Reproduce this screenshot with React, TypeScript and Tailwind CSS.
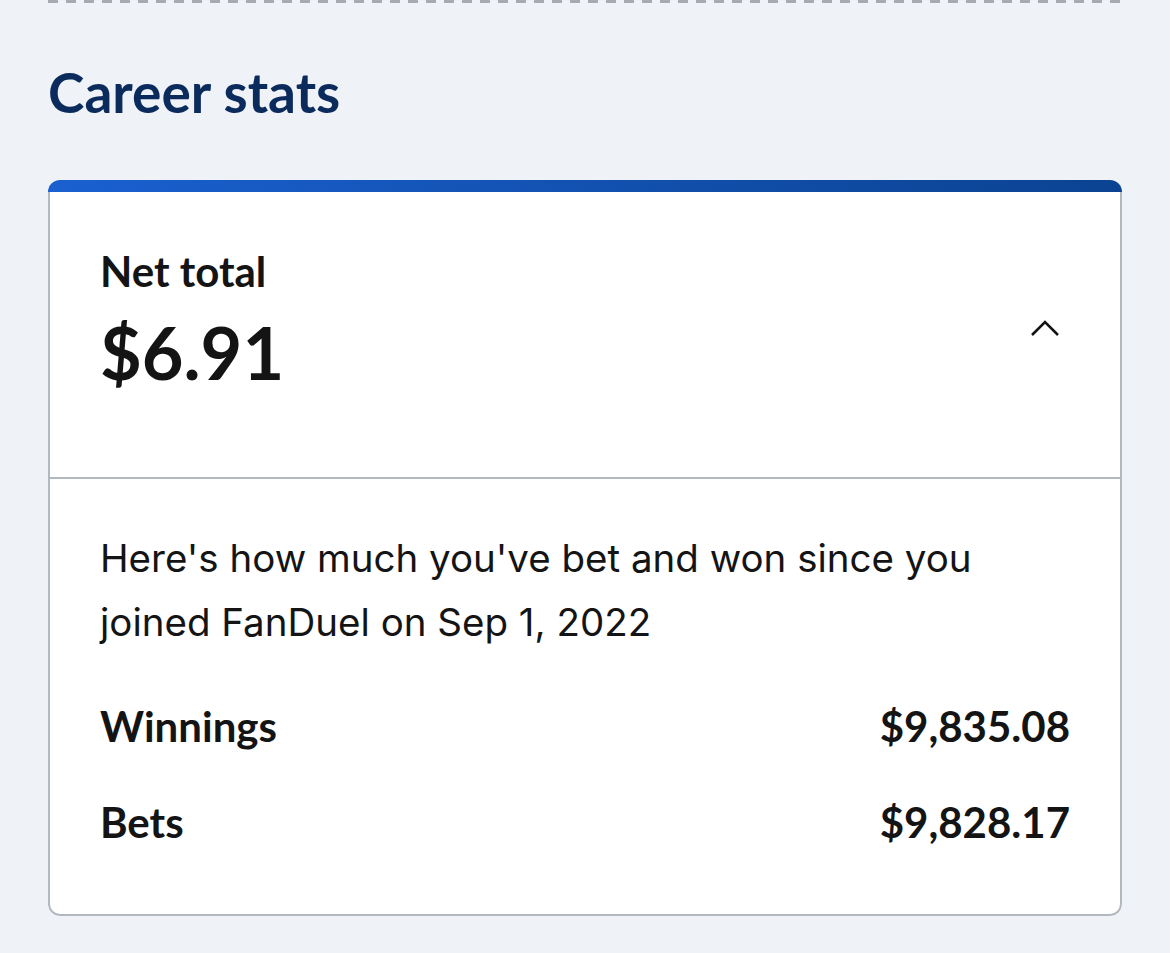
import React from "react";

export default function App() {
  const font = { fontFamily: "Lato, 'Noto Sans', sans-serif" };
  const body = { fontFamily: "Inter, 'Noto Sans', sans-serif" };
  return (
    <div className="min-h-[953px] w-[1170px] bg-[#eff2f7] pl-[48px] pr-[48px]" style={font}>
      <div className="h-[3px] w-full bg-[repeating-linear-gradient(90deg,#a7abb1_0px,#a7abb1_10px,transparent_10px,transparent_18px)]" />
      <h2 className="mt-[59px] text-[55px] leading-[60px] font-bold text-[#0b2b5c]">Career stats</h2>
      <div className="mt-[58px] overflow-hidden rounded-[12px]">
        <div className="h-[12px] bg-gradient-to-r from-[#1a60d0] to-[#0b4392]" />
        <div className="rounded-b-[12px] border-x-2 border-b-2 border-[#b1b8c0] bg-white">
          <div className="flex items-center justify-between px-[50px] pt-[54px] pb-[80px]">
            <div className="text-[#141414]">
              <div className="text-[42px] leading-[50px] font-bold">Net total</div>
              <div className="mt-[11px] text-[72px] leading-[90px] font-bold">$6.91</div>
            </div>
            <svg width="30" height="20" viewBox="0 0 30 20" className="mr-[10px] mt-[10px]">
              <polyline points="2,18 15,5 28,18" fill="none" stroke="#141414" strokeWidth="2.6" />
            </svg>
          </div>
          <div className="h-[2px] bg-[#b1b8c0]" />
          <div className="px-[50px] pt-[47px] pb-[62px] text-[#141414]">
            <p className="text-[38.5px] leading-[64px]" style={body}>
              Here's how much you've bet and won since you joined FanDuel on Sep 1, 2022
            </p>
            <div className="mt-[42px] flex items-center justify-between text-[42px] leading-[60px] font-bold">
              <span>Winnings</span>
              <span>$9,835.08</span>
            </div>
            <div className="mt-[36px] flex items-center justify-between text-[42px] leading-[60px] font-bold">
              <span>Bets</span>
              <span>$9,828.17</span>
            </div>
          </div>
        </div>
      </div>
    </div>
  );
}
